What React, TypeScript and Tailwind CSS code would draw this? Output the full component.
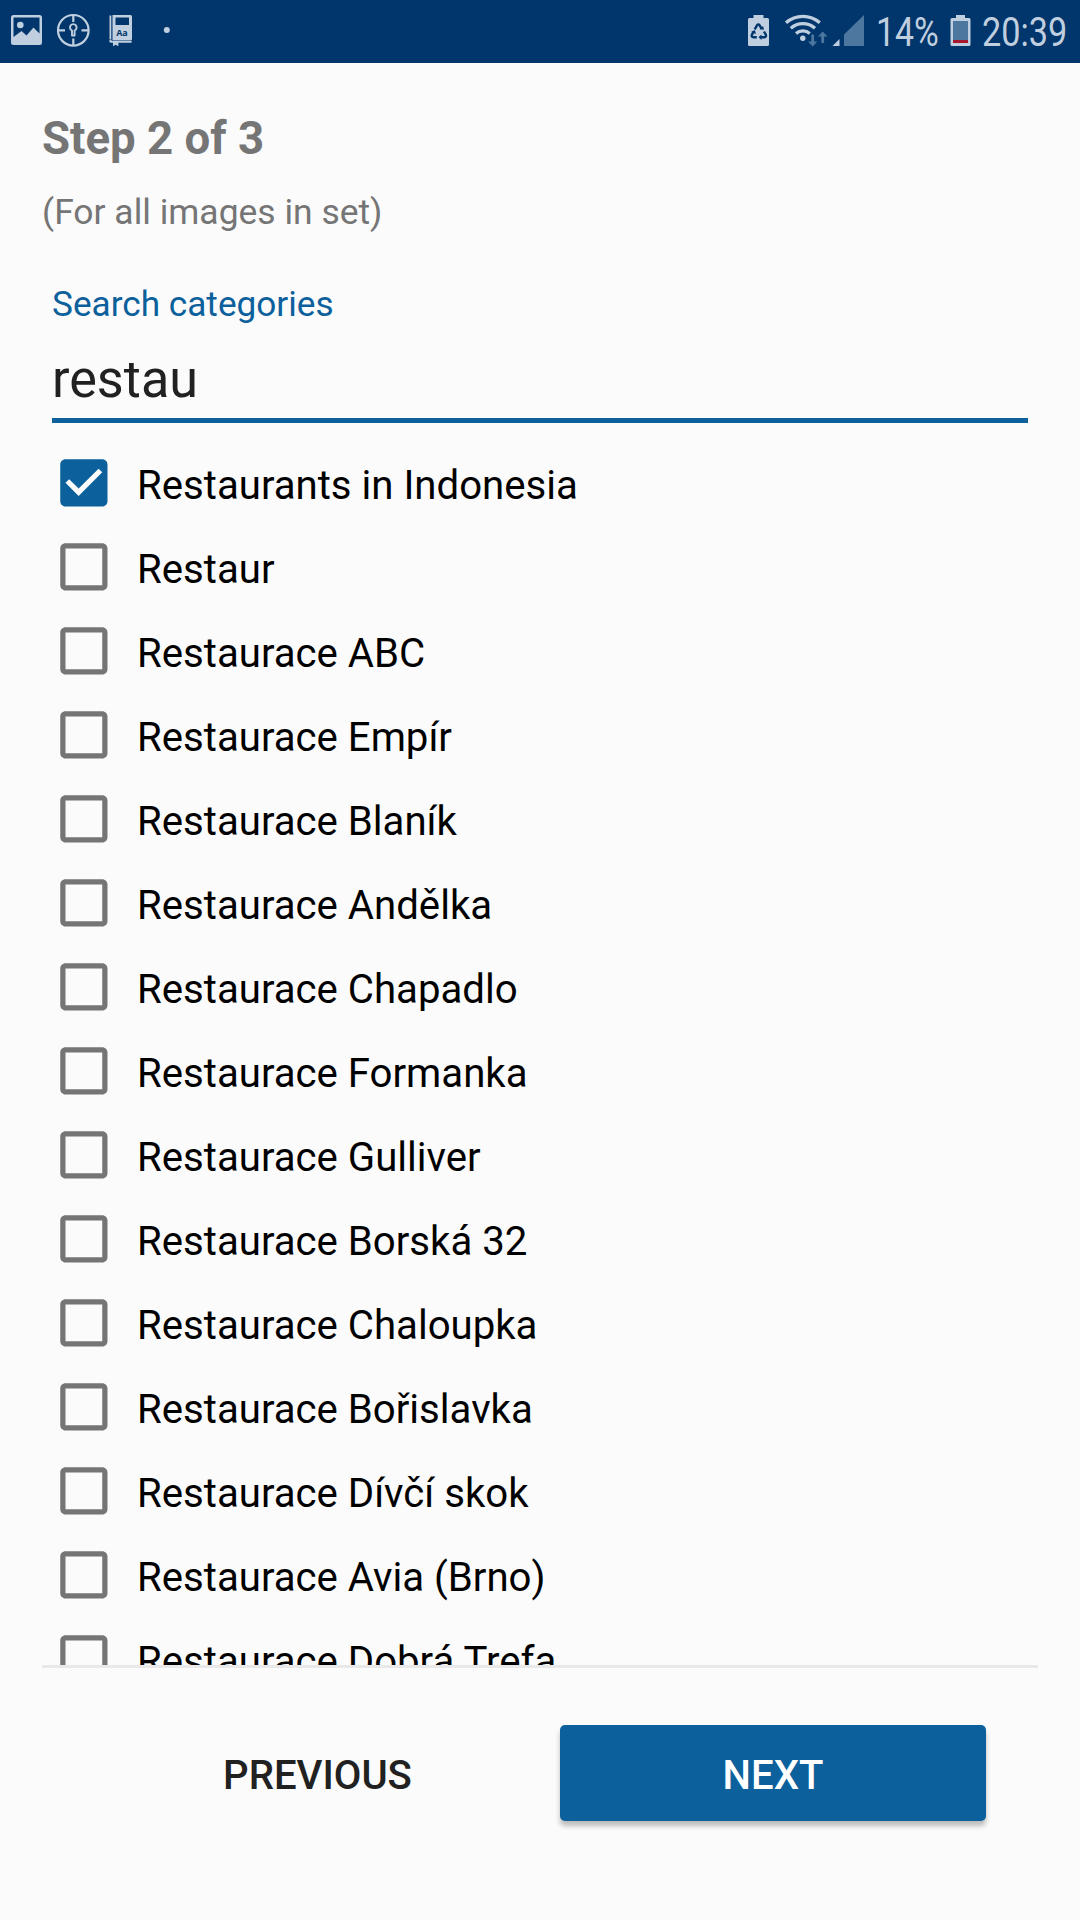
import React from "react";

const categories = [
  { name: "Restaurants in Indonesia", checked: true },
  { name: "Restaur", checked: false },
  { name: "Restaurace ABC", checked: false },
  { name: "Restaurace Empír", checked: false },
  { name: "Restaurace Blaník", checked: false },
  { name: "Restaurace Andělka", checked: false },
  { name: "Restaurace Chapadlo", checked: false },
  { name: "Restaurace Formanka", checked: false },
  { name: "Restaurace Gulliver", checked: false },
  { name: "Restaurace Borská 32", checked: false },
  { name: "Restaurace Chaloupka", checked: false },
  { name: "Restaurace Bořislavka", checked: false },
  { name: "Restaurace Dívčí skok", checked: false },
  { name: "Restaurace Avia (Brno)", checked: false },
  { name: "Restaurace Dobrá Trefa", checked: false },
];

function Checkbox({ checked }: { checked: boolean }) {
  return (
    <svg viewBox="-0.14 -0.14 24 24" className={checked ? "mb-px size-[63px] shrink-0 text-[#0c609c]" : "mb-px size-[63px] shrink-0 text-[#757575]"} fill="currentColor">
      {checked ? (
        <path d="M19 3H5c-1.11 0-2 .9-2 2v14c0 1.1.89 2 2 2h14c1.11 0 2-.9 2-2V5c0-1.1-.89-2-2-2zm-9 14l-5-5 1.41-1.41L10 14.17l7.59-7.59L19 8l-9 9z" />
      ) : (
        <path d="M19 5v14H5V5h14m0-2H5c-1.1 0-2 .9-2 2v14c0 1.1.9 2 2 2h14c1.1 0 2-.9 2-2V5c0-1.1-.9-2-2-2z" />
      )}
    </svg>
  );
}

function NotificationIcons() {
  return (
    <svg className="h-[63px] w-[200px]" viewBox="0 0 200 63" fill="#c0cfdf">
      <path fillRule="evenodd" d="M13.5 15h26a2.500 2.500 0 0 1 2.500 2.500v25a2.500 2.500 0 0 1-2.500 2.500h-26a2.500 2.500 0 0 1-2.500-2.500v-25a2.500 2.500 0 0 1 2.500-2.500zM13.500 17.500v19.500l8-6 5 4.500 7-8 6 6v-16z" />
      <circle cx="20.300" cy="25" r="3.300" />
      <g fill="none" stroke="#c0cfdf" strokeWidth="2.200">
        <circle cx="73.300" cy="30.300" r="15.300" />
        <path d="M73.300 15v7M73.300 38.500v7M58 30.300h7M81.500 30.300h7" />
        <path strokeWidth="1.900" d="M72 35.500v-5a3.300 3.300 0 1 1 2.600 0v5z" strokeLinejoin="round" />
      </g>
      <path d="M109.500 15.500h1.800v24h-1.800z" />
      <path fillRule="evenodd" d="M113 15h17.500q1.500 0 1.500 1.500v22.500q0 1.500-1.500 1.500H112.500V15zM115.500 17.500v7.500h13.500v-7.500z" />
      <path d="M112 39.500q-2.800 0-2.800 1.600t1.800 1.700h2v3.400l2.600-1.500 2.800 1.500v-3.500h13.200v-1.700h-20v-1.500z" />
      <text x="116.300" y="36" fontFamily="Open Sans, sans-serif" fontWeight="700" fontSize="9" fill="#00366b" textLength="11.500">Aa</text>
      <circle cx="166.800" cy="30" r="3" />
    </svg>
  );
}

function SystemIcons() {
  return (
    <svg className="h-[63px] w-[130px]" viewBox="740 0 130 63" fill="#c0cfdf">
      <path d="M753.500 15h10v3h4q1.500 0 1.500 1.500v25q0 1.500-1.500 1.500h-18q-1.500 0-1.500-1.500v-25q0-1.500 1.500-1.500h4z" />
      <g fill="none" stroke="#00366b" strokeWidth="2.400">
        <path d="M754.700 29.300l2.300-4q1.300-1.800 2.600 0l2.200 3.700" />
        <path d="M764 31.500l1.800 3.200q.7 2.300-1.500 2.600h-4" />
        <path d="M756.800 37.300h-3.300q-2.600-.3-1.500-2.700l1.600-2.800" />
      </g>
      <path fill="#00366b" d="M764 29.800l-4.600-.5 3.700-3.200zM758.500 37.300l3-2.800v5.600zM754.800 30l1.200 4-5-2z" />
      <g fill="none" stroke="#c0cfdf" strokeWidth="3.200">
        <path d="M786 22.800a25.500 25.500 0 0 1 33.800 0" />
        <path d="M790.800 28.300a18 18 0 0 1 24.200 0" />
        <path d="M796 33.500a10.500 10.500 0 0 1 13.800 0" />
      </g>
      <circle cx="802.800" cy="38.300" r="2.700" />
      <path fill="#4d779f" d="M811.300 34.500h2.800v7h3.200l-4.600 5-4.700-5h3.300zM821.300 43v-6.500h-3.300l4.700-5 4.700 5h-3.300v6.500z" />
      <path d="M832.500 46l7-7v7z" />
      <path fill="#4d779f" d="M844 46V34.500L864 15v31z" />
    </svg>
  );
}

function StatusBar() {
  return (
    <header className="flex h-[63px] shrink-0 items-center justify-between bg-[#00366b] text-[40px] leading-[63px] text-[#c0cfdf]">
      <NotificationIcons />
      <div className="flex h-full w-[340px] items-center">
        <SystemIcons />
        <div className="ml-[6px] w-[74px] pt-[1px]">
          <div className="origin-left scale-x-[0.845] whitespace-nowrap">14%</div>
        </div>
        <svg className="h-[63px] w-[21px]" viewBox="0 0 21 63">
          <path fill="#c0cfdf" d="M6 15h9v3h4q1.500 0 1.500 1.500v25q0 1.500-1.500 1.500h-17q-1.500 0-1.500-1.500v-25q0-1.500 1.500-1.500h4z" />
          <path fill="#4d779f" d="M3 21h15v19h-15z" />
          <path fill="#a8182c" d="M3 40h15v3h-15z" />
        </svg>
        <div className="ml-[11px] w-[86px] pt-[1px]">
          <div className="origin-left scale-x-[0.855] whitespace-nowrap">20:39</div>
        </div>
      </div>
    </header>
  );
}

export default function App() {
  return (
    <div className="flex h-[1920px] w-[1080px] flex-col overflow-hidden bg-[#fbfbfb] font-[Roboto,sans-serif]">
      <StatusBar />
      <main className="flex flex-col px-[42px]">
        <h1 className="mt-[46px] h-[60px] text-[45.6px] leading-[60px] font-bold text-[#757575]">Step 2 of 3</h1>
        <p className="mt-[19px] h-[48px] text-[35.45px] leading-[48px] text-[#757575]">(For all images in set)</p>
        <div className="mt-[44px] flex flex-col px-[10px]">
          <label htmlFor="search" className="h-[48px] text-[35.2px] leading-[48px] text-[#0c609c]">Search categories</label>
          <input id="search" defaultValue="restau" className="mt-[14px] h-[81px] border-b-[5px] border-[#0c609c] bg-transparent pb-[2px] text-[52.2px] leading-[72px] text-[#212121] outline-none" />
        </div>
        <ul className="mt-[18px] h-[1224px] overflow-hidden pl-[10px]">
          {categories.map((c) => (
            <li key={c.name} className="flex h-[84px] items-center">
              <Checkbox checked={c.checked} />
              <span className="ml-[22px] pt-[6px] text-[40.17px] leading-[60px] text-black">{c.name}</span>
            </li>
          ))}
        </ul>
        <div className="h-[3px] bg-[#e9e9e9]" />
      </main>
      <footer className="mt-[57px] flex gap-[30px] pl-[104px] text-[40.1px] font-medium">
        <button className="h-[96px] w-[426px] pt-[7px] pl-px text-[#212121]">PREVIOUS</button>
        <button className="h-[96px] w-[426px] rounded-[5px] bg-[#0c609c] pt-[7px] text-white shadow-[0_5px_5px_rgba(0,0,0,0.25)]">NEXT</button>
      </footer>
    </div>
  );
}
